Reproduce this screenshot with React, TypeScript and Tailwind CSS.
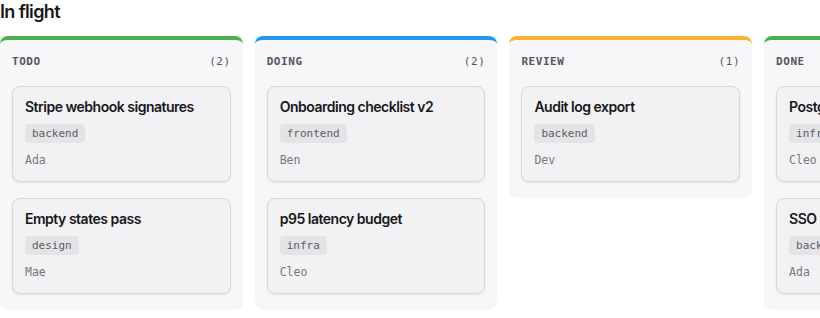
const columns = [
  {
    name: 'TODO',
    accent: 'border-t-[#4caf50]',
    cards: [
      { title: 'Stripe webhook signatures', tag: 'backend', who: 'Ada' },
      { title: 'Empty states pass', tag: 'design', who: 'Mae' },
    ],
  },
  {
    name: 'DOING',
    accent: 'border-t-[#2196f3]',
    cards: [
      { title: 'Onboarding checklist v2', tag: 'frontend', who: 'Ben' },
      { title: 'p95 latency budget', tag: 'infra', who: 'Cleo' },
    ],
  },
  {
    name: 'REVIEW',
    accent: 'border-t-[#f9b233]',
    cards: [{ title: 'Audit log export', tag: 'backend', who: 'Dev' }],
  },
  {
    name: 'DONE',
    accent: 'border-t-[#4caf50]',
    cards: [
      { title: 'Postgres 16 upgrade', tag: 'infra', who: 'Cleo' },
      { title: 'SSO via SAML', tag: 'backend', who: 'Ada' },
    ],
  },
]

const mono = 'font-["DejaVu_Sans_Mono",monospace]'

function Card({ title, tag, who }: { title: string; tag: string; who: string }) {
  return (
    <div className="rounded-lg border border-[#d7d7db] bg-[#f2f2f4] px-3 pt-[11px] pb-[13px] shadow-[0_1px_2px_rgba(0,0,0,0.08)]">
      <div className="text-[14px] leading-[18px] font-semibold tracking-[-0.035em] text-[#18181b] whitespace-nowrap">
        {title}
      </div>
      <div className="mt-[8px] flex">
        <span className={`${mono} h-[19px] rounded bg-[#e4e4e7] px-[7px] text-[11px] leading-[19px] text-[#5b5b63]`}>
          {tag}
        </span>
      </div>
      <div className={`${mono} mt-[9px] text-[11.5px] leading-4 text-[#76767e]`}>{who}</div>
    </div>
  )
}

export default function App() {
  return (
    <div className="h-[318px] w-[820px] overflow-hidden bg-white font-['Inter',sans-serif]">
      <h2 className="mb-3 text-[18px] leading-[24px] font-semibold tracking-[-0.035em] text-[#18181b]">In flight</h2>
      <div className="flex items-start gap-3">
        {columns.map((col) => (
          <div
            key={col.name}
            className={`w-[242.7px] shrink-0 rounded-lg border-t-4 ${col.accent} bg-[#f7f7f9] px-3 pt-[14px] pb-4`}
          >
            <div className={`${mono} flex items-center justify-between text-[11px] leading-4 tracking-wider text-[#55555d]`}>
              <span className="font-bold">{col.name}</span>
              <span>({col.cards.length})</span>
            </div>
            <div className="mt-4 flex flex-col gap-4">
              {col.cards.map((c) => (
                <Card key={c.title} {...c} />
              ))}
            </div>
          </div>
        ))}
      </div>
    </div>
  )
}
